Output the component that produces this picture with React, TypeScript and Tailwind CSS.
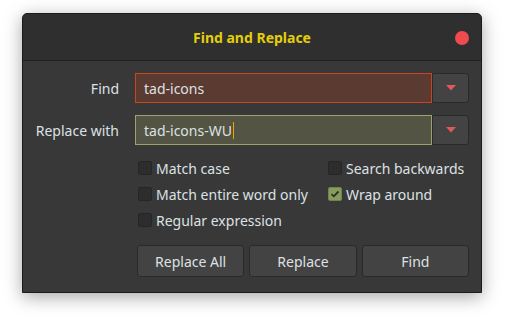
import React from "react";

function Check({ checked, label }: { checked?: boolean; label: string }) {
  return (
    <div className="flex items-center h-[26px]">
      {checked ? (
        <div className="w-[14px] h-[14px] rounded-[2px] bg-[#879c5e] border border-[#6f8250] flex items-center justify-center">
          <svg width="10" height="8" viewBox="0 0 10 8">
            <path d="M1.5 4.2 L3.8 6.3 L8.5 1.5" fill="none" stroke="#2b2f24" strokeWidth="1.8" />
          </svg>
        </div>
      ) : (
        <div className="w-[14px] h-[14px] rounded-[2px] bg-[#2d2d2d] border border-[#262626]" />
      )}
      <span className="ml-[4px]">{label}</span>
    </div>
  );
}

function Arrow() {
  return (
    <div className="w-[37px] h-[30px] bg-[#434343] border border-[#2a2a2a] rounded-r-[3px] flex items-center justify-center">
      <svg width="10" height="6" viewBox="0 0 10 6">
        <path d="M0 0 L10 0 L5 5.5 Z" fill="#e2575b" />
      </svg>
    </div>
  );
}

export default function App() {
  return (
    <div
      className="w-[505px] h-[323px] bg-white pt-[13px] pl-[22px]"
      style={{ fontFamily: '"Noto Sans", sans-serif' }}
    >
      <div className="w-[460px] h-[280px] flex flex-col bg-[#383838] border border-[#1b1b1b] rounded-t-[5px] shadow-[0_4px_18px_rgba(0,0,0,0.35)] text-[14px] text-[#dde1e4]">
        <div className="relative h-[47px] bg-[#2f2f2f] border-b border-[#202020] rounded-t-[5px] flex items-center justify-center">
          <span className="font-bold text-[#e4ce0a] text-[14px]">Find and Replace</span>
          <div className="absolute right-[12px] top-[17px] w-[14px] h-[14px] rounded-full bg-[#ef4a50]" />
        </div>
        <div className="flex flex-col pt-[12px] pr-[12px]">
          <div className="flex items-center h-[30px]">
            <div className="w-[96px] text-right">Find</div>
            <div className="ml-[16px] flex-1 h-[30px] bg-[#5b3a31] border border-[#c9451f] flex items-center pl-[8px]">
              tad-icons
            </div>
            <Arrow />
          </div>
          <div className="flex items-center h-[30px] mt-[12px]">
            <div className="w-[96px] text-right">Replace with</div>
            <div className="ml-[16px] flex-1 h-[30px] bg-[#535443] border border-[#9fa26c] flex items-center pl-[8px]">
              tad-icons-WU
              <span className="inline-block w-[1px] h-[17px] bg-[#f3a200] ml-[1px]" />
            </div>
            <Arrow />
          </div>
          <div className="grid grid-cols-[190px_1fr] mt-[10px] ml-[115px]">
            <Check label="Match case" />
            <Check label="Search backwards" />
            <Check label="Match entire word only" />
            <Check checked label="Wrap around" />
            <Check label="Regular expression" />
          </div>
          <div className="grid grid-cols-3 gap-[5px] ml-[114px] mt-[12px]">
            {["Replace All", "Replace", "Find"].map((t) => (
              <div
                key={t}
                className="h-[32px] bg-[#434343] border border-[#2a2a2a] rounded-[3px] flex items-center justify-center"
              >
                {t}
              </div>
            ))}
          </div>
        </div>
      </div>
    </div>
  );
}
